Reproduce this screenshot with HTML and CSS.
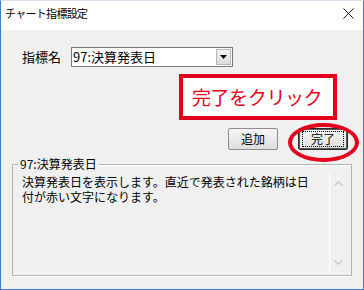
FILE: index.html
```html
<!DOCTYPE html>
<html>
<head>
<meta charset="utf-8">
<title>チャート指標設定</title>
<link rel="stylesheet" href="styles.css">
</head>
<body>
<div class="window">
  <div class="titlebar">
    <span class="title">チャート指標設定</span>
    <svg class="close" width="11" height="11" viewBox="0 0 11 11">
      <path d="M0.5 0.5 L10.5 10.5 M10.5 0.5 L0.5 10.5" stroke="#111" stroke-width="1" fill="none"/>
    </svg>
  </div>

  <div class="content">
    <div class="name-row">
      <span class="label">指標名</span>
      <div class="combo">
        <span class="combo-text">97:決算発表日</span>
        <span class="combo-btn">
          <svg width="7" height="4" viewBox="0 0 7 4"><path d="M0 0 H7 L3.5 4 Z" fill="#000"/></svg>
        </span>
      </div>
    </div>

    <div class="buttons">
      <button class="btn">追加</button>
      <button class="btn default"><span class="focus">完了</span></button>
    </div>

    <fieldset class="group">
      <legend>97:決算発表日</legend>
      <div class="memo">
        <div class="memo-text">決算発表日を表示します。直近で発表された銘柄は日<br>付が赤い文字になります。</div>
        <div class="scroll">
          <svg width="9" height="5" viewBox="0 0 9 5"><path d="M0.5 4.5 L4.5 0.8 L8.5 4.5" stroke="#c4c4c4" stroke-width="1.3" fill="none"/></svg>
          <svg width="9" height="5" viewBox="0 0 9 5"><path d="M0.5 0.5 L4.5 4.2 L8.5 0.5" stroke="#c4c4c4" stroke-width="1.3" fill="none"/></svg>
        </div>
      </div>
    </fieldset>
  </div>

  <!-- annotation overlays -->
  <div class="callout">完了をクリック</div>
  <div class="ring"></div>
</div>
</body>
</html>
```

FILE: styles.css
```css
body {
  margin: 0;
  font-family: "Noto Sans CJK JP", "Noto Sans", sans-serif;
  color: #000;
}

.window {
  position: relative;
  width: 364px;
  height: 290px;
  box-sizing: border-box;
  border: 1px solid #3b7cd0;
  border-top-color: #d6e2f2;
  background: #f0f0f0;
  overflow: hidden;
}

.titlebar {
  height: 29px;
  background: #fff;
  display: flex;
  justify-content: space-between;
  align-items: flex-start;
  padding: 4px 9px 0 4px;
  box-sizing: border-box;
}

.title {
  font-size: 11px;
  letter-spacing: -0.7px;
  line-height: 16px;
}

.close {
  margin-top: 3px;
}

.content {
  padding-top: 17px;
}

.name-row {
  display: flex;
  align-items: center;
  padding-left: 21px;
  gap: 10px;
}

.label {
  font-size: 13px;
  line-height: 16px;
}

.combo {
  width: 162px;
  height: 20px;
  box-sizing: border-box;
  border: 1px solid #7a7a7a;
  background: #fff;
  display: flex;
  align-items: center;
  justify-content: space-between;
}

.combo-text {
  font-size: 13px;
  line-height: 16px;
  padding-left: 1px;
}

.combo-btn {
  width: 15px;
  height: 16px;
  margin-right: 1px;
  box-sizing: border-box;
  border: 1px solid #b5b5b5;
  background: linear-gradient(#f4f4f4, #dcdcdc);
  display: flex;
  align-items: center;
  justify-content: center;
}

.buttons {
  display: flex;
  justify-content: flex-end;
  gap: 20px;
  padding-right: 15px;
  margin-top: 61px;
}

.btn {
  width: 50px;
  height: 22px;
  padding: 0;
  font-family: inherit;
  font-size: 12px;
  line-height: 14px;
  background: linear-gradient(#f6f6f6, #dedede);
  border: 1px solid #8d8d8d;
  border-radius: 2px;
  display: flex;
  align-items: center;
  justify-content: center;
}

.btn.default {
  border: 1px solid #2a2a2a;
  box-shadow: inset 0 0 0 1px #5a5a5a;
}

.focus {
  display: block;
  width: 40px;
  height: 14px;
  border: 1px dotted #000;
}

.group {
  margin: 7px 11px 0 11px;
  padding: 0;
  border: 1px solid #b4b4b4;
  box-shadow: 0 1px 0 #fff, inset 0 1px 0 #fff;
  height: 119px;
  box-sizing: border-box;
}

.group legend {
  font-size: 12px;
  line-height: 14px;
  padding: 0 2px;
  margin-left: 5px;
}

.memo {
  display: flex;
  height: 100px;
  margin: 1px 4px 0 2px;
}

.memo-text {
  flex: 1;
  font-size: 12px;
  letter-spacing: 0;
  line-height: 15px;
  padding: 2px 0 0 7px;
  white-space: nowrap;
}

.scroll {
  width: 17px;
  border-left: 1px solid #fff;
  display: flex;
  flex-direction: column;
  justify-content: space-between;
  align-items: center;
  padding: 9px 0 7px;
}

.callout {
  position: absolute;
  left: 178px;
  top: 73px;
  width: 158px;
  height: 46px;
  box-sizing: border-box;
  border: 4px solid #e3001b;
  background: #fff;
  color: #e3001b;
  font-size: 19px;
  letter-spacing: -0.4px;
  line-height: 38px;
  padding-left: 9px;
}

.ring {
  position: absolute;
  left: 287px;
  top: 122px;
  width: 71px;
  height: 39px;
  box-sizing: border-box;
  border: 4px solid #e3001b;
  border-radius: 50%;
}
```
